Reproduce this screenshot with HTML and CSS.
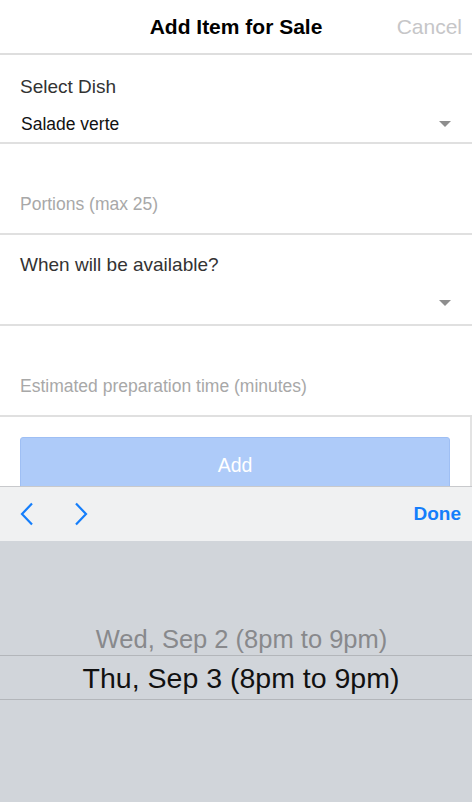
FILE: index.html
```html
<!DOCTYPE html>
<html>
<head>
<meta charset="utf-8">
<link rel="stylesheet" href="styles.css">
</head>
<body>
<div class="screen">
  <header class="navbar">
    <div class="nav-title">Add Item for Sale</div>
    <div class="nav-cancel">Cancel</div>
  </header>

  <section class="field field-select">
    <div class="label">Select Dish</div>
    <div class="select-row">
      <span class="value">Salade verte</span>
      <span class="caret"></span>
    </div>
  </section>

  <section class="field field-input">
    <div class="placeholder">Portions (max 25)</div>
  </section>

  <section class="field field-when">
    <div class="label">When will be available?</div>
    <div class="select-row empty">
      <span class="value"></span>
      <span class="caret"></span>
    </div>
  </section>

  <section class="field field-input">
    <div class="placeholder">Estimated preparation time (minutes)</div>
  </section>

  <section class="actions">
    <div class="add-btn">Add</div>
  </section>
</div>

<div class="keyboard">
  <div class="toolbar">
    <div class="nav-arrows">
      <svg class="arrow" width="14" height="24" viewBox="0 0 14 24"><path d="M12 1.5 L2 12 L12 22.5" fill="none" stroke="#157efb" stroke-width="2.2"/></svg>
      <svg class="arrow" width="14" height="24" viewBox="0 0 14 24"><path d="M2 1.5 L12 12 L2 22.5" fill="none" stroke="#157efb" stroke-width="2.2"/></svg>
    </div>
    <div class="done">Done</div>
  </div>
  <div class="picker">
    <div class="opt opt-prev">Wed, Sep 2 (8pm to 9pm)</div>
    <div class="opt opt-sel">Thu, Sep 3 (8pm to 9pm)</div>
  </div>
</div>
</body>
</html>
```

FILE: styles.css
```css
* { box-sizing: border-box; }
html, body {
  margin: 0;
  padding: 0;
  background: #ffffff;
  font-family: "Liberation Sans", Arial, sans-serif;
}
.screen {
  width: 472px;
  height: 802px;
  overflow: hidden;
}
.navbar {
  height: 55px;
  border-bottom: 2px solid #dedede;
  display: flex;
  align-items: center;
  justify-content: center;
  position: relative;
}
.nav-title {
  font-size: 21px;
  font-weight: bold;
  color: #000;
}
.nav-cancel {
  position: absolute;
  right: 10px;
  top: 15px;
  font-size: 21px;
  color: #c6c6c8;
}
.field {
  height: 91px;
  border-bottom: 2px solid #e0e0e0;
  padding: 0 20px;
}
.field-select { height: 89px; padding-top: 21px; }
.field-when { padding-top: 19px; }
.field-input { padding-top: 50px; }
.label {
  font-size: 19px;
  line-height: 22px;
  color: #333333;
}
.select-row {
  display: flex;
  justify-content: space-between;
  align-items: center;
  height: 20px;
  margin-top: 16px;
}
.field-select .value { padding-left: 1px; }
.field-when .select-row { margin-top: 17px; }
.value {
  font-size: 17.5px;
  line-height: 20px;
  color: #111;
}
.caret {
  width: 0;
  height: 0;
  border-left: 6px solid transparent;
  border-right: 6px solid transparent;
  border-top: 6px solid #8e8e8e;
  margin-right: 1px;
}
.placeholder {
  font-size: 17.5px;
  line-height: 20px;
  color: #a8a8a8;
}
.actions {
  padding: 20px 20px 0 20px;
  border-right: 2px solid #e3e3e3;
  height: 90px;
}
.add-btn {
  width: 430px;
  height: 56px;
  background: #aecbf9;
  border: 1px solid #9fbff4;
  border-radius: 3px;
  color: #ffffff;
  font-size: 19.5px;
  display: flex;
  align-items: center;
  justify-content: center;
}
.keyboard {
  position: fixed;
  left: 0;
  bottom: 0;
  width: 472px;
  height: 316px;
  display: flex;
  flex-direction: column;
}
.toolbar {
  height: 55px;
  background: #f0f1f2;
  border-top: 1px solid #c8c9cc;
  display: flex;
  align-items: center;
  justify-content: space-between;
  padding: 0 11px 0 20px;
}
.nav-arrows {
  display: flex;
  gap: 40px;
  align-items: center;
}
.arrow { display: block; }
.done {
  color: #157efb;
  font-weight: bold;
  font-size: 19px;
}
.picker {
  flex: 1;
  background: #d1d5da;
  display: flex;
  flex-direction: column;
  align-items: center;
  padding-top: 83px;
}
.opt-prev {
  font-size: 25.5px;
  line-height: 30px;
  color: #88898c;
  height: 31px;
  padding-left: 11px;
}
.opt-sel {
  width: 100%;
  text-align: center;
  font-size: 28.5px;
  line-height: 42px;
  padding: 1px 0 0 10px;
  color: #111111;
  border-top: 1px solid #b3b6ba;
  border-bottom: 1px solid #b3b6ba;
}
```
